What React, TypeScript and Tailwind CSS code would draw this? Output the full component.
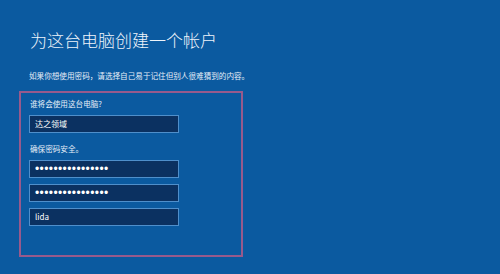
const font = { fontFamily: '"Noto Sans CJK SC", "Liberation Sans", sans-serif' };

function Field({ value, secret }: { value: string; secret?: boolean }) {
  return (
    <div className="w-[150px] h-[18px] border border-[#4f8fcb] bg-[#0b3161] flex items-center pl-[5px] text-white">
      {secret ? (
        <span className="text-[12px] leading-none tracking-[0.4px] font-['Liberation_Sans']">{value}</span>
      ) : (
        <span className="text-[8px] leading-none">{value}</span>
      )}
    </div>
  );
}

export default function App() {
  return (
    <div className="w-[500px] h-[274px] bg-[#0b5aa0] pt-[29px] pl-[19px] text-white overflow-hidden" style={font}>
      <h1 className="ml-[11px] text-[17px] leading-[22px] font-light text-[#eef4fb]">为这台电脑创建一个帐户</h1>
      <p className="ml-[10px] mt-[20px] text-[7.6px] leading-[10px] text-[#e6eef8]">
        如果你想使用密码，请选择自己易于记住但别人很难猜到的内容。
      </p>
      <div className="mt-[10px] w-[224px] h-[166px] border-2 border-[#985a8c] pt-[6px] px-[8px]">
        <div className="ml-[1px] text-[7.6px] leading-[10px] text-[#e6eef8]">谁将会使用这台电脑?</div>
        <div className="mt-[6px]">
          <Field value="达之领域" />
        </div>
        <div className="ml-[1px] mt-[11px] text-[7.6px] leading-[10px] text-[#e6eef8]">确保密码安全。</div>
        <div className="mt-[6px] flex flex-col gap-[6px]">
          <Field value="••••••••••••••••" secret />
          <Field value="••••••••••••••••" secret />
          <Field value="lida" />
        </div>
      </div>
    </div>
  );
}
